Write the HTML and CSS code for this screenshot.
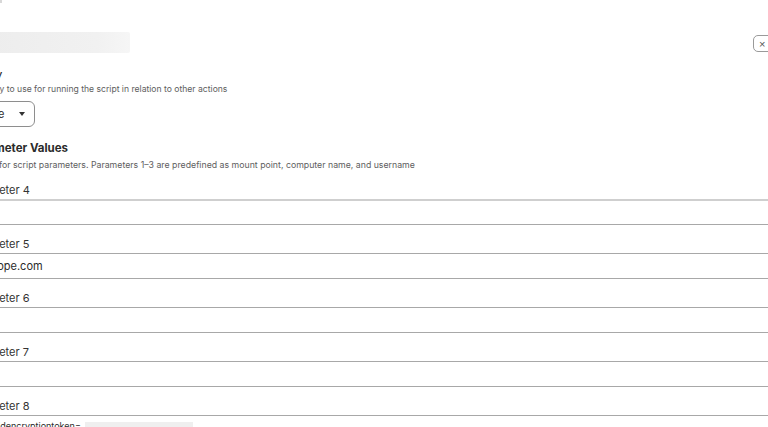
FILE: index.html
```html
<!DOCTYPE html>
<html>
<head>
<meta charset="utf-8">
<link rel="stylesheet" href="styles.css">
</head>
<body>
<div class="dialog">
  <div class="top-mark"></div>
  <div class="header">
    <div class="redacted-title"></div>
    <button class="close" aria-label="Close">×</button>
  </div>
  <section class="group">
    <h3 class="field-title">Priority</h3>
    <p class="desc priority-desc">Priority to use for running the script in relation to other actions</p>
    <div class="select">
      <span class="select-text">Before</span>
      <svg class="caret" width="6" height="4" viewBox="0 0 6 4"><path d="M0 0H6L3 4Z" fill="#333"/></svg>
    </div>
  </section>
  <section class="group params">
    <h2 class="section-title">Parameter Values</h2>
    <p class="desc params-desc">Values for script parameters. Parameters 1–3 are predefined as mount point, computer name, and username</p>
    <div class="param">
      <label class="param-label">Parameter 4</label>
      <div class="input first"></div>
    </div>
    <div class="param">
      <label class="param-label">Parameter 5</label>
      <div class="input"><span class="value">jamf.scope.com</span></div>
    </div>
    <div class="param">
      <label class="param-label">Parameter 6</label>
      <div class="input"></div>
    </div>
    <div class="param">
      <label class="param-label">Parameter 7</label>
      <div class="input"></div>
    </div>
    <div class="param">
      <label class="param-label">Parameter 8</label>
      <div class="input multi"><span class="value small">--fieldencryptiontoken=</span><span class="redact"></span></div>
    </div>
  </section>
</div>
</body>
</html>
```
FILE: styles.css
```css
html, body {
  margin: 0;
  padding: 0;
  background: #ffffff;
  overflow: hidden;
}
body {
  width: 768px;
  height: 427px;
  font-family: Inter, "Noto Sans", sans-serif;
  color: #2b2b2b;
}
.dialog {
  margin-left: -36px;
  width: 840px;
  position: relative;
}
.top-mark {
  position: absolute;
  left: 36px;
  top: 0;
  width: 2px;
  height: 3px;
  background: #d8d8d8;
}
.header {
  display: flex;
  align-items: flex-start;
  justify-content: space-between;
  padding-top: 32px;
  height: 21px;
}
.redacted-title {
  width: 166px;
  height: 21px;
  background: linear-gradient(90deg, #ececec, #f1f1f1 80%, #f6f6f6);
  border-radius: 2px;
}
.close {
  margin-top: 3px;
  margin-right: 29px;
  width: 22px;
  height: 17px;
  border: 1px solid #9a9a9a;
  border-radius: 5px;
  background: #fff;
  color: #555;
  font-size: 11px;
  line-height: 14px;
  padding: 0 0 0 5px;
  text-align: left;
  font-family: "Liberation Sans", sans-serif;
}
.group {
  display: flex;
  flex-direction: column;
}
.field-title {
  margin: 14px 0 0;
  font-size: 11px;
  font-weight: 500;
  line-height: 14px;
  color: #2b2b2b;
}
.desc {
  margin: 1px 0 0 0;
  font-size: 8.75px;
  line-height: 12px;
  color: #5e5e5e;
}
.priority-desc {
  font-size: 8.6px;
  margin-top: 2px;
  margin-left: 11px;
}
.select {
  align-self: flex-start;
  margin-top: 6px;
  margin-left: -6px;
  height: 24px;
  border: 1px solid #8e8e8e;
  border-radius: 6px;
  display: flex;
  align-items: center;
  padding-left: 11px;
  padding-right: 9px;
  gap: 15px;
}
.select-text {
  font-size: 11px;
  color: #2b2b2b;
}
.caret {
  display: block;
}
.params {
  margin-top: 14px;
}
.section-title {
  margin: 0 0 0 5px;
  font-size: 11.5px;
  font-weight: 700;
  line-height: 15px;
  color: #2b2b2b;
}
.params-desc {
  margin-top: 3px;
  margin-left: 5px;
}
.param {
  display: flex;
  flex-direction: column;
}
.param-label {
  margin-top: 12px;
  margin-left: 2px;
  font-size: 11px;
  line-height: 14px;
  color: #333;
}
.input {
  margin-top: 2px;
  height: 24px;
  border-top: 1px solid #a8a8a8;
  border-bottom: 1px solid #a8a8a8;
  display: flex;
  align-items: center;
}
.input.first {
  border-top: 2px solid #cfcfcf;
  height: 23px;
}
.input.multi {
  align-items: flex-start;
  padding-top: 4px;
}
.value {
  font-size: 11px;
  color: #2b2b2b;
  margin-left: -4px;
}
.value.small {
  font-size: 9px;
  line-height: 11px;
  margin-left: 15px;
}
.redact {
  display: inline-block;
  width: 108px;
  height: 14px;
  margin-top: 2px;
  margin-left: 4px;
  background: #efefef;
}
```
